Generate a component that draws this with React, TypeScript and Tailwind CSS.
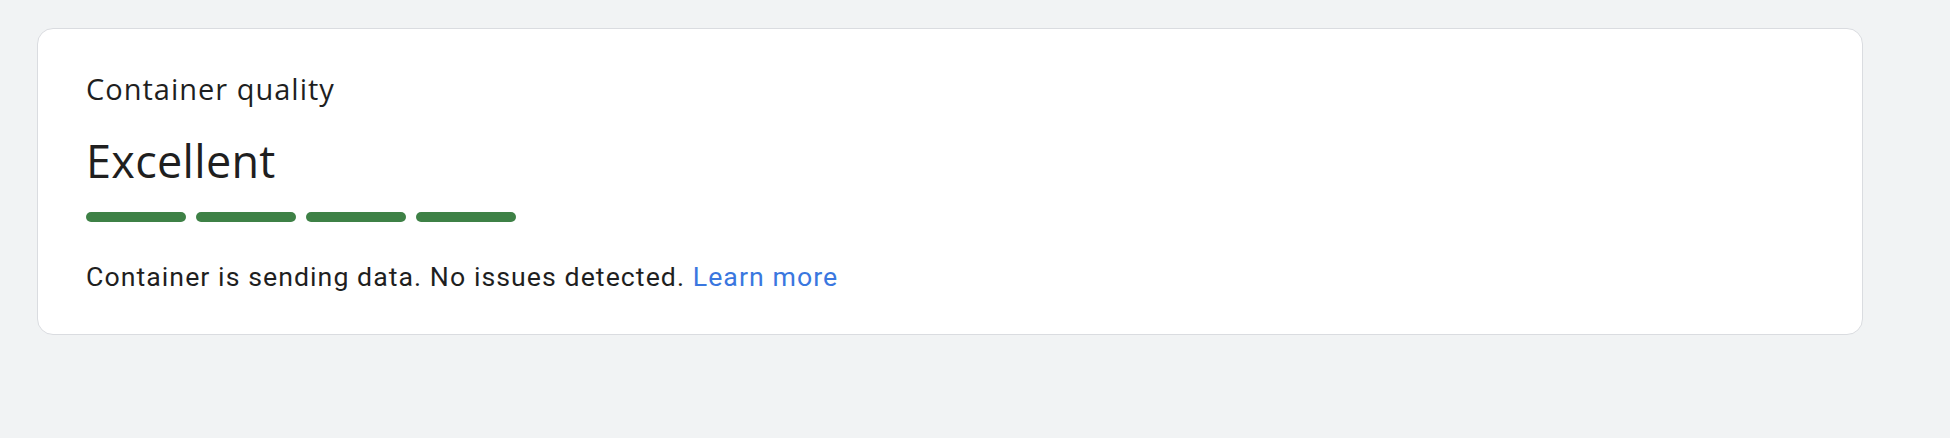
import React from "react";

export default function App() {
  return (
    <div className="min-h-[438px] w-full bg-[#f1f3f4] pt-[28px] pl-[37px]">
      <div className="w-[1826px] rounded-[16px] border border-[#dadce0] bg-white pl-[48px] pt-[42px] pb-[41px]">
        <div
          className="text-[29px] leading-[36px] tracking-[1px] text-[#1f1f1f]"
          style={{ fontFamily: '"Open Sans", "Noto Sans", sans-serif' }}
        >
          Container quality
        </div>
        <div
          className="mt-[28px] text-[45px] leading-[52px] tracking-[0.3px] text-[#1f1f1f]"
          style={{ fontFamily: '"Open Sans", "Noto Sans", sans-serif' }}
        >
          Excellent
        </div>
        <div className="mt-[25px] flex gap-[10px]">
          <div className="h-[10px] w-[100px] rounded-full bg-[#3e8146]" />
          <div className="h-[10px] w-[100px] rounded-full bg-[#3e8146]" />
          <div className="h-[10px] w-[100px] rounded-full bg-[#3e8146]" />
          <div className="h-[10px] w-[100px] rounded-full bg-[#3e8146]" />
        </div>
        <div
          className="mt-[39px] text-[26.7px] leading-[32px] tracking-[1.05px] text-[#1f1f1f]"
          style={{ fontFamily: 'Roboto, "Liberation Sans", sans-serif' }}
        >
          Container is sending data. No issues detected.{" "}
          <a className="text-[#3a77df]" href="#">
            Learn more
          </a>
        </div>
      </div>
    </div>
  );
}
